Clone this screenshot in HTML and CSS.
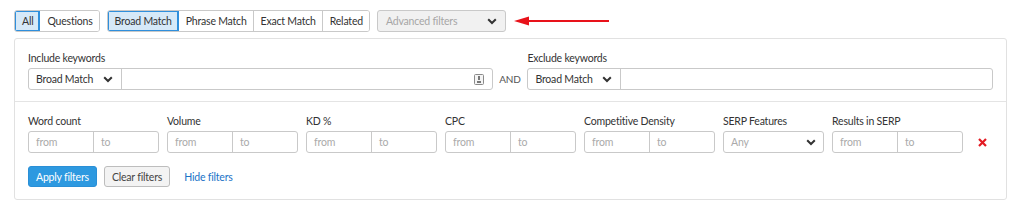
FILE: index.html
```html
<!DOCTYPE html>
<html>
<head>
<meta charset="utf-8">
<link rel="stylesheet" href="styles.css">
</head>
<body>
<div class="toolbar">
  <div class="seg">
    <span class="seg-btn active">All</span>
    <span class="seg-btn">Questions</span>
  </div>
  <div class="seg">
    <span class="seg-btn active">Broad Match</span>
    <span class="seg-btn">Phrase Match</span>
    <span class="seg-btn">Exact Match</span>
    <span class="seg-btn">Related</span>
  </div>
  <div class="adv">
    <span>Advanced filters</span>
    <svg class="chev" width="10" height="7" viewBox="0 0 10 7"><path d="M1.2 1.2L5 5 8.8 1.2" fill="none" stroke="#333" stroke-width="2"/></svg>
  </div>
  <svg class="arrow" width="96" height="12" viewBox="0 0 96 12"><path d="M12 6H95" stroke="#e8121a" stroke-width="2.2" fill="none"/><path d="M0 6L15 1.5V10.5Z" fill="#e8121a"/></svg>
</div>

<div class="panel">
  <div class="kw-row">
    <div class="kw-group include">
      <div class="label">Include keywords</div>
      <div class="kw-field">
        <div class="match-sel"><span>Broad Match</span><svg class="chev" width="10" height="7" viewBox="0 0 10 7"><path d="M1.2 1.2L5 5 8.8 1.2" fill="none" stroke="#333" stroke-width="2"/></svg></div>
        <div class="kw-input">
          <svg class="kw-icon" width="10" height="11" viewBox="0 0 10 11"><rect x="0.5" y="0.5" width="9" height="10" rx="1" fill="#f4f4f4" stroke="#8a8a8a"/><rect x="4" y="2" width="2" height="4" fill="#777"/><rect x="3" y="7" width="4" height="2" fill="#777"/></svg>
        </div>
      </div>
    </div>
    <div class="and">AND</div>
    <div class="kw-group exclude">
      <div class="label">Exclude keywords</div>
      <div class="kw-field">
        <div class="match-sel"><span>Broad Match</span><svg class="chev" width="10" height="7" viewBox="0 0 10 7"><path d="M1.2 1.2L5 5 8.8 1.2" fill="none" stroke="#333" stroke-width="2"/></svg></div>
        <div class="kw-input"></div>
      </div>
    </div>
  </div>

  <div class="filters">
    <div class="filter-row">
      <div class="filter">
        <div class="label">Word count</div>
        <div class="range"><span class="ph">from</span><span class="ph">to</span></div>
      </div>
      <div class="filter">
        <div class="label">Volume</div>
        <div class="range"><span class="ph">from</span><span class="ph">to</span></div>
      </div>
      <div class="filter">
        <div class="label">KD %</div>
        <div class="range"><span class="ph">from</span><span class="ph">to</span></div>
      </div>
      <div class="filter">
        <div class="label">CPC</div>
        <div class="range"><span class="ph">from</span><span class="ph">to</span></div>
      </div>
      <div class="filter">
        <div class="label">Competitive Density</div>
        <div class="range"><span class="ph">from</span><span class="ph">to</span></div>
      </div>
      <div class="filter serp">
        <div class="label">SERP Features</div>
        <div class="select"><span class="ph">Any</span><svg class="chev" width="10" height="7" viewBox="0 0 10 7"><path d="M1.2 1.2L5 5 8.8 1.2" fill="none" stroke="#333" stroke-width="2"/></svg></div>
      </div>
      <div class="filter">
        <div class="label">Results in SERP</div>
        <div class="range"><span class="ph">from</span><span class="ph">to</span></div>
      </div>
      <div class="remove">
        <svg width="9" height="9" viewBox="0 0 9 9"><path d="M1 1L8 8M8 1L1 8" stroke="#e31b23" stroke-width="2.2"/></svg>
      </div>
    </div>
    <div class="actions">
      <span class="btn primary">Apply filters</span>
      <span class="btn secondary">Clear filters</span>
      <span class="link">Hide filters</span>
    </div>
  </div>
</div>
</body>
</html>
```

FILE: styles.css
```css
* { box-sizing: border-box; }
body {
  margin: 0;
  background: #fff;
  font-family: Lato, "Open Sans", sans-serif;
  font-size: 10.5px;
  letter-spacing: -0.2px;
  color: #333;
}
.toolbar {
  display: flex;
  align-items: center;
  padding: 10px 0 0 14px;
  height: 32px;
}
.seg {
  display: flex;
  border: 1px solid #c9c9c9;
  border-radius: 3px;
  height: 22px;
  margin-right: 7px;
  overflow: hidden;
}
.seg-btn {
  display: flex;
  align-items: center;
  padding: 0 6px 0 7px;
  border-left: 1px solid #c9c9c9;
  background: #fff;
  color: #333;
}
.seg-btn:first-child { border-left: none; }
.seg-btn.active {
  background: #d6e9f8;
  box-shadow: inset 0 0 0 1px #2f8fdc;
}
.seg .seg-btn.active + .seg-btn { border-left-color: #2f8fdc; }
.adv {
  display: flex;
  align-items: center;
  justify-content: space-between;
  width: 129px;
  height: 22px;
  padding: 0 8px 0 8px;
  border: 1px solid #c9c9c9;
  border-radius: 3px;
  background: #f1f1f1;
  color: #a6a6a6;
}
.arrow { margin-left: 8px; }

.panel {
  margin: 6px 0 0 14px;
  width: 993px;
  height: 162px;
  border: 1px solid #e1e1e1;
  border-radius: 3px;
}
.kw-row {
  display: flex;
  align-items: flex-end;
  padding: 12px 13px 11px 13px;
  border-bottom: 1px solid #e4e4e4;
  height: 63px;
}
.label {
  line-height: 12px;
  height: 12px;
  margin-bottom: 4px;
  color: #333;
}
.include { width: 465px; }
.exclude { width: 466px; }
.kw-field {
  display: flex;
  height: 22px;
  border: 1px solid #c9c9c9;
  border-radius: 3px;
}
.match-sel {
  display: flex;
  align-items: center;
  justify-content: space-between;
  width: 93px;
  padding: 0 8px 0 7px;
  border-right: 1px solid #c9c9c9;
}
.kw-input {
  flex: 1;
  display: flex;
  align-items: center;
  justify-content: flex-end;
  padding-right: 8px;
}
.and {
  width: 35px;
  text-align: center;
  height: 22px;
  line-height: 22px;
  color: #555;
  font-size: 10px;
}
.filters {
  padding: 13px 13px 12px 13px;
}
.filter-row {
  display: flex;
  align-items: flex-end;
  gap: 8px;
}
.filter { width: 131px; }
.filter.serp { width: 101px; }
.range {
  display: flex;
  height: 22px;
  border: 1px solid #c9c9c9;
  border-radius: 3px;
}
.range .ph {
  flex: 1;
  display: flex;
  align-items: center;
  padding-left: 7px;
}
.range .ph + .ph { border-left: 1px solid #c9c9c9; }
.ph { color: #aaa; }
.select {
  display: flex;
  align-items: center;
  justify-content: space-between;
  height: 22px;
  padding: 0 7px;
  border: 1px solid #c9c9c9;
  border-radius: 3px;
}
.remove {
  display: flex;
  align-items: center;
  height: 22px;
  margin-left: 7px;
}
.actions {
  display: flex;
  align-items: center;
  margin-top: 13px;
  gap: 7px;
}
.btn {
  display: flex;
  align-items: center;
  height: 21px;
  padding: 0 7px;
  border-radius: 3px;
}
.btn.primary {
  background: #2d99e0;
  color: #fff;
  border: 1px solid #2a8fd6;
}
.btn.secondary {
  background: #f3f3f3;
  color: #444;
  border: 1px solid #bdbdbd;
}
.link {
  color: #1b73c7;
  margin-left: 7px;
}
```
